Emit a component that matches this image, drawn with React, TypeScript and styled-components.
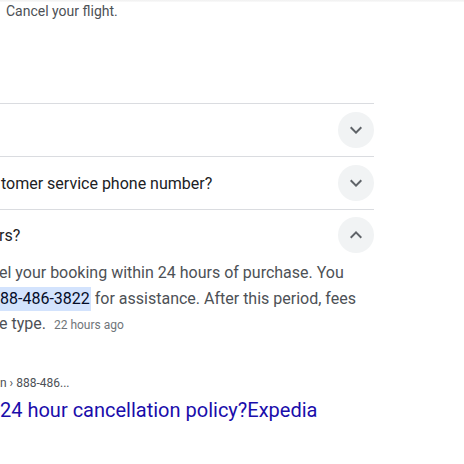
import React, { FC } from 'react';
import styled, { createGlobalStyle } from 'styled-components';

const GlobalStyle = createGlobalStyle`
  html, body {
    margin: 0;
    padding: 0;
    background: #fff;
  }
  body {
    font-family: Roboto, "Liberation Sans", Arial, sans-serif;
    width: 464px;
    height: 464px;
    overflow: hidden;
  }
`

const PageStyle = styled.div`
  width: 464px;
  height: 464px;
  overflow: hidden;
  background: #fff;
`

const TopEdge = styled.div`
  height: 2px;
  background: linear-gradient(#f0f0f0, #fafafa);
`

const ColumnStyle = styled.div`
  width: 374px;
`

const SnippetLine = styled.div`
  font-size: 14px;
  line-height: 20px;
  color: #4d5156;
  padding-left: 6px;
  margin-top: -1px;
  height: 102px;
`

const ItemStyle = styled.div`
  border-top: 1px solid #dadce0;
`

const ItemHead = styled.div<{ $h: number }>`
  height: ${p => p.$h}px;
  display: flex;
  align-items: center;
  justify-content: space-between;
  font-size: 16px;
  color: #202124;
  white-space: nowrap;
`

const Question = styled.span<{ $cut: number }>`
  margin-left: ${p => -p.$cut}px;
`

const ChevronButton = styled.div`
  width: 36px;
  height: 36px;
  border-radius: 50%;
  background: #f1f3f4;
  display: flex;
  align-items: center;
  justify-content: center;
  flex-shrink: 0;
`

const Answer = styled.div`
  font-size: 16px;
  line-height: 25.5px;
  color: #4d5156;
  white-space: nowrap;
`

const AnswerLine = styled.div<{ $cut: number }>`
  margin-left: ${p => -p.$cut}px;
`

const Phone = styled.mark`
  background: #d3e3fd;
  color: #040c28;
  padding: 2px 1px 3px 0;
`

const TimeAgo = styled.span`
  font-size: 12px;
  color: #70757a;
  margin-left: 8px;
`

const ResultStyle = styled.div`
  margin-top: 35px;
  white-space: nowrap;
`

const Crumb = styled.div`
  font-size: 12px;
  line-height: 18px;
  color: #4d5156;
`

const ResultTitle = styled.a`
  display: block;
  margin-top: 5px;
  font-size: 20px;
  line-height: 26px;
  color: #1a0dab;
  text-decoration: none;
`

const Chevron: FC<{ up?: boolean }> = ({ up }) => (
  <svg width="24" height="24" viewBox="0 0 24 24" fill="#5f6368">
    {up
      ? <path d="M7.41 15.41 12 10.83l4.59 4.58L18 14l-6-6-6 6z" />
      : <path d="M7.41 8.59 12 13.17l4.59-4.58L18 10l-6 6-6-6z" />}
  </svg>
)

const App: FC = () => {
  return <PageStyle>
    <GlobalStyle />
    <TopEdge />
    <ColumnStyle>
      <SnippetLine>Cancel your flight.</SnippetLine>

      <ItemStyle>
        <ItemHead $h={52}>
          <Question $cut={0}></Question>
          <ChevronButton><Chevron /></ChevronButton>
        </ItemHead>
      </ItemStyle>

      <ItemStyle>
        <ItemHead $h={52}>
          <Question $cut={-1}>tomer service phone number?</Question>
          <ChevronButton><Chevron /></ChevronButton>
        </ItemHead>
      </ItemStyle>

      <ItemStyle>
        <ItemHead $h={50}>
          <Question $cut={1}>rs?</Question>
          <ChevronButton><Chevron up /></ChevronButton>
        </ItemHead>
        <Answer>
          <AnswerLine $cut={1}>el your booking within 24 hours of purchase. You</AnswerLine>
          <AnswerLine $cut={0}><Phone>88-486-3822</Phone> for assistance. After this period, fees</AnswerLine>
          <AnswerLine $cut={1}>e type.<TimeAgo>22 hours ago</TimeAgo></AnswerLine>
        </Answer>
      </ItemStyle>

      <ResultStyle>
        <Crumb>n › 888-486...</Crumb>
        <ResultTitle href="#">24 hour cancellation policy?Expedia</ResultTitle>
      </ResultStyle>
    </ColumnStyle>
  </PageStyle>
}

export default App
